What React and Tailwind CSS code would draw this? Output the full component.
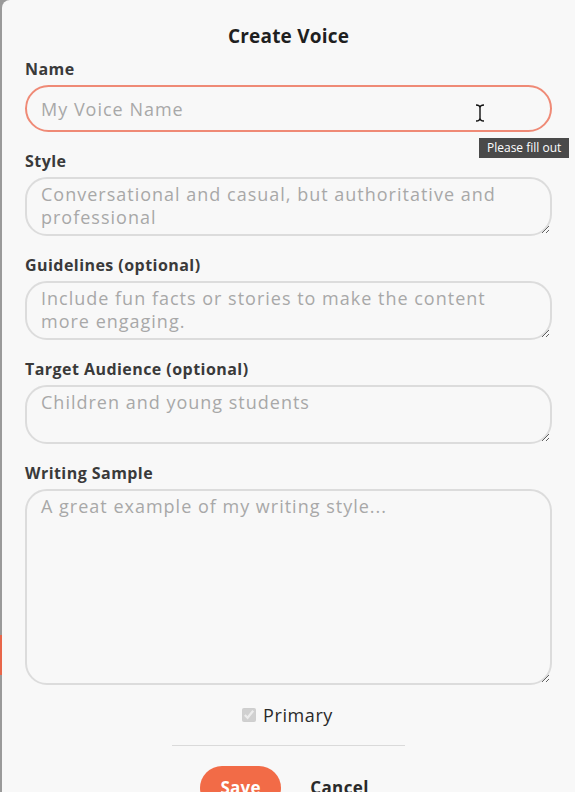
import { useState } from "react";

const fields = [
  { label: "Style", placeholder: "Conversational and casual, but authoritative and professional", h: "h-[59px]" },
  { label: "Guidelines (optional)", placeholder: "Include fun facts or stories to make the content more engaging.", h: "h-[59px]" },
  { label: "Target Audience (optional)", placeholder: "Children and young students", h: "h-[59px]" },
  { label: "Writing Sample", placeholder: "A great example of my writing style...", h: "h-[196px]" },
];

function App() {
  const [name, setName] = useState("");

  return (
    <div className="h-[792px] overflow-hidden flex bg-[#9a9a9a]" style={{ fontFamily: '"Open Sans", sans-serif' }}>
      {/* page behind the modal */}
      <div className="w-[2px] flex flex-col">
        <div className="h-[635px]" />
        <div className="h-[40px] bg-[#e8664a]" />
      </div>

      {/* modal */}
      <div className="flex-1 bg-[#f8f8f8] rounded-tl-lg px-[23px] pt-[24px] relative">
        <h2 className="text-center text-[19px] leading-[25px] font-bold tracking-[0.2px] text-[#1f1f1f]">Create Voice</h2>

        <div className="mt-[10px]">
          <label className="block text-[16px] leading-[20px] font-bold tracking-[0.45px] text-[#3a3a3a]">Name</label>
          <input
            type="text"
            value={name}
            onChange={(e) => setName(e.target.value)}
            placeholder="My Voice Name"
            className="mt-[6px] w-full h-[47px] rounded-full border-2 border-[#ef8a76] bg-transparent px-[14px] text-[18px] tracking-[1px] outline-none placeholder:text-[#a8a8a8]"
          />
        </div>

        {fields.map((f) => (
          <div key={f.label} className="mt-[19px]">
            <label className="block text-[16px] leading-[20px] font-bold tracking-[0.45px] text-[#3a3a3a]">{f.label}</label>
            <textarea
              placeholder={f.placeholder}
              className={`mt-[6px] block w-full ${f.h} rounded-[22px] border-2 border-[#dcdcdc] bg-transparent px-[14px] py-[4px] text-[18px] leading-[23px] tracking-[1px] outline-none placeholder:text-[#a8a8a8]`}
            />
          </div>
        ))}

        {/* primary checkbox */}
        <div className="mt-[19px] flex items-center justify-center gap-[7px] pr-[2px]">
          <input type="checkbox" checked disabled readOnly className="w-[14px] h-[14px] accent-[#cfcfcf]" />
          <span className="text-[18px] leading-[22px] tracking-[0.6px] text-[#2a2a2a]">Primary</span>
        </div>

        <div className="mx-auto mt-[19px] w-[233px] h-px bg-[#dadada]" />

        {/* actions */}
        <div className="mt-[20px] flex items-center justify-center gap-[29px] pr-[8px]">
          <button className="h-[44px] w-[81px] rounded-full bg-[#f26b47] text-white text-[17px] font-bold tracking-[0.3px]">Save</button>
          <button className="text-[17px] font-bold tracking-[0.4px] text-[#2a2a2a]">Cancel</button>
        </div>

        {/* native validation tooltip + cursor */}
        <div className="absolute left-[477px] top-[138px] bg-[#4a4a4a] text-white text-[12px] leading-[20px] px-[8px] whitespace-nowrap">
          Please fill out
        </div>
        <svg className="absolute left-[473px] top-[104px]" width="10" height="18" viewBox="0 0 10 18">
          <path d="M1 1 Q5 1 5 4 L5 14 Q5 17 1 17 M9 1 Q5 1 5 4 M5 14 Q5 17 9 17" stroke="#111" strokeWidth="1.4" fill="none" />
        </svg>
      </div>
    </div>
  );
}

export default App;
